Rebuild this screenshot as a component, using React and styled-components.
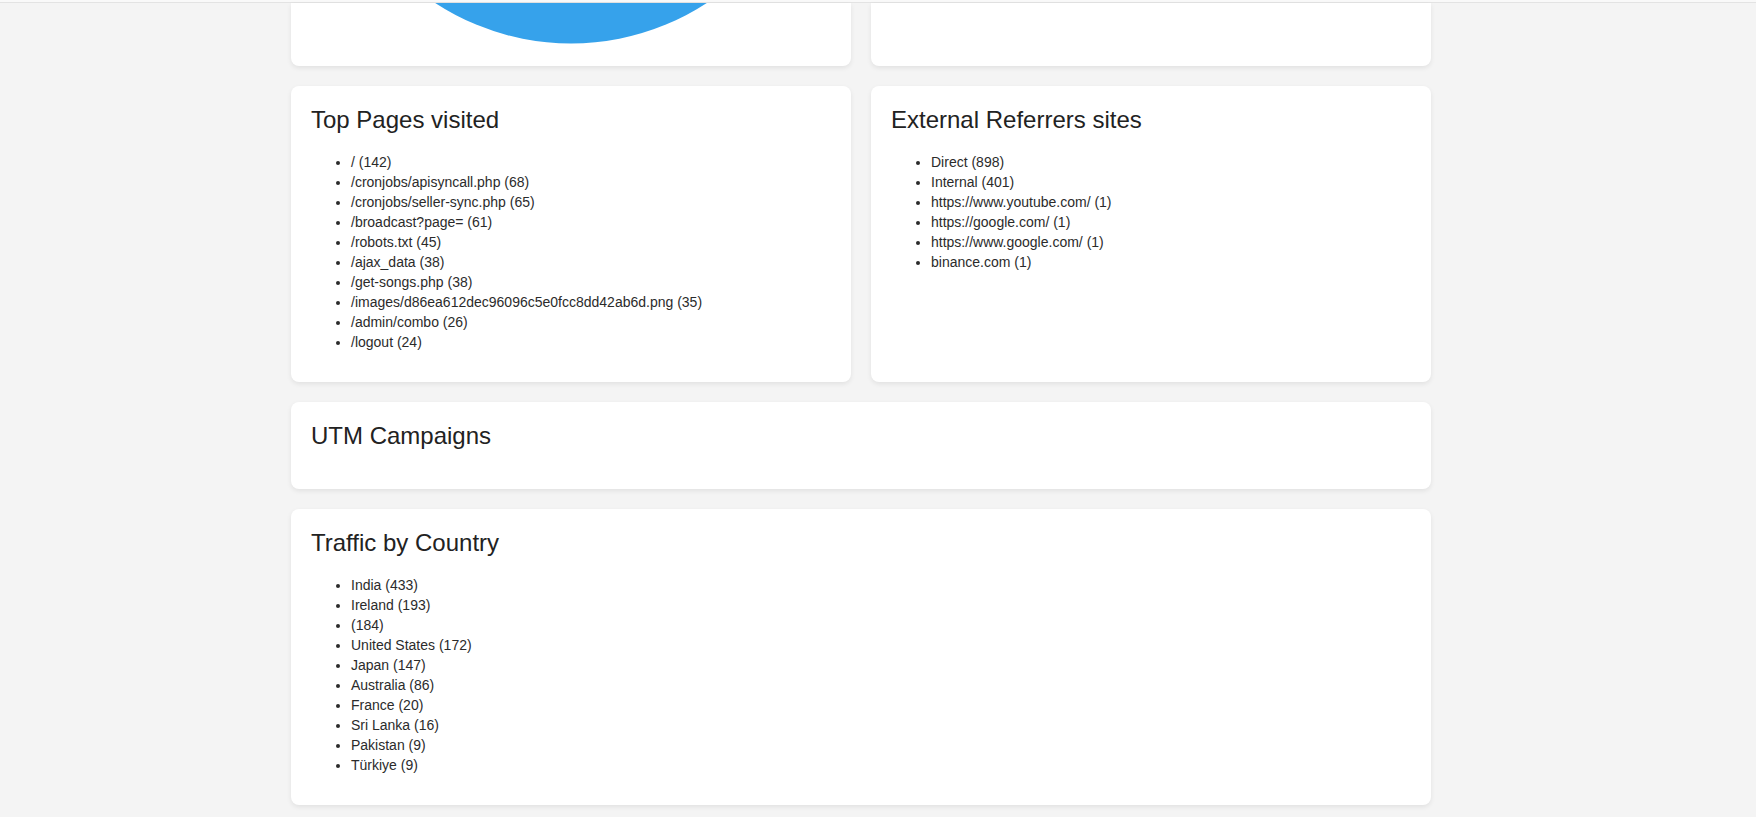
import React from "react";
import styled, { createGlobalStyle } from "styled-components";

const GlobalStyle = createGlobalStyle`
  body {
    margin: 0;
    background: #f4f4f4;
    font-family: "Liberation Sans", Arial, sans-serif;
    font-size: 14px;
    color: #333;
  }
`;

const TopBar = styled.div`
  height: 2px;
  background: #f9f9f9;
  border-bottom: 1px solid #e3e3e3;
`;

const Page = styled.div`
  display: flex;
  justify-content: center;
  padding-right: 34px;
`;

const Grid = styled.div`
  width: 1140px;
  display: grid;
  grid-template-columns: 1fr 1fr;
  column-gap: 20px;
  row-gap: 20px;
  padding-bottom: 12px;
`;

const Card = styled.div`
  background: #fff;
  border-radius: ${({ $cut }) => ($cut ? "0 0 8px 8px" : "8px")};
  box-shadow: 0 2px 5px rgba(0, 0, 0, 0.08);
  padding: ${({ $cut }) => ($cut ? "0" : "20px")};
  grid-column: ${({ $wide }) => ($wide ? "1 / -1" : "auto")};
  overflow: hidden;
  height: ${({ $cut }) => ($cut ? "63px" : "auto")};
`;

const Title = styled.h3`
  margin: 0 0 19px;
  padding-top: 1px;
  font-size: 24px;
  font-weight: 400;
  line-height: 1.1;
  color: #222;
`;

const List = styled.ul`
  margin: 0 0 10px;
  padding-left: 40px;
  line-height: 20px;
  color: #2b2b2b;
`;

const ChartStub = styled.svg`
  display: block;
  width: 100%;
  height: 63px;
`;

const topPages = [
  ["/", 142],
  ["/cronjobs/apisyncall.php", 68],
  ["/cronjobs/seller-sync.php", 65],
  ["/broadcast?page=", 61],
  ["/robots.txt", 45],
  ["/ajax_data", 38],
  ["/get-songs.php", 38],
  ["/images/d86ea612dec96096c5e0fcc8dd42ab6d.png", 35],
  ["/admin/combo", 26],
  ["/logout", 24],
];

const referrers = [
  ["Direct", 898],
  ["Internal", 401],
  ["https://www.youtube.com/", 1],
  ["https://google.com/", 1],
  ["https://www.google.com/", 1],
  ["binance.com", 1],
];

const countries = [
  ["India", 433],
  ["Ireland", 193],
  ["", 184],
  ["United States", 172],
  ["Japan", 147],
  ["Australia", 86],
  ["France", 20],
  ["Sri Lanka", 16],
  ["Pakistan", 9],
  ["Türkiye", 9],
];

const StatList = ({ items }) => (
  <List>
    {items.map(([label, count], i) => (
      <li key={i}>
        {label ? `${label} (${count})` : `(${count})`}
      </li>
    ))}
  </List>
);

const App = () => {
  return (
    <>
      <GlobalStyle />
      <TopBar />
      <Page>
        <Grid>
          <Card $cut>
            <ChartStub viewBox="0 0 560 63" preserveAspectRatio="none">
              <circle cx="280" cy="-207.5" r="248" fill="#36a2eb" />
            </ChartStub>
          </Card>
          <Card $cut />

          <Card>
            <Title>Top Pages visited</Title>
            <StatList items={topPages} />
          </Card>
          <Card>
            <Title>External Referrers sites</Title>
            <StatList items={referrers} />
          </Card>

          <Card $wide>
            <Title>UTM Campaigns</Title>
          </Card>

          <Card $wide>
            <Title>Traffic by Country</Title>
            <StatList items={countries} />
          </Card>
        </Grid>
      </Page>
    </>
  );
};

export default App;
